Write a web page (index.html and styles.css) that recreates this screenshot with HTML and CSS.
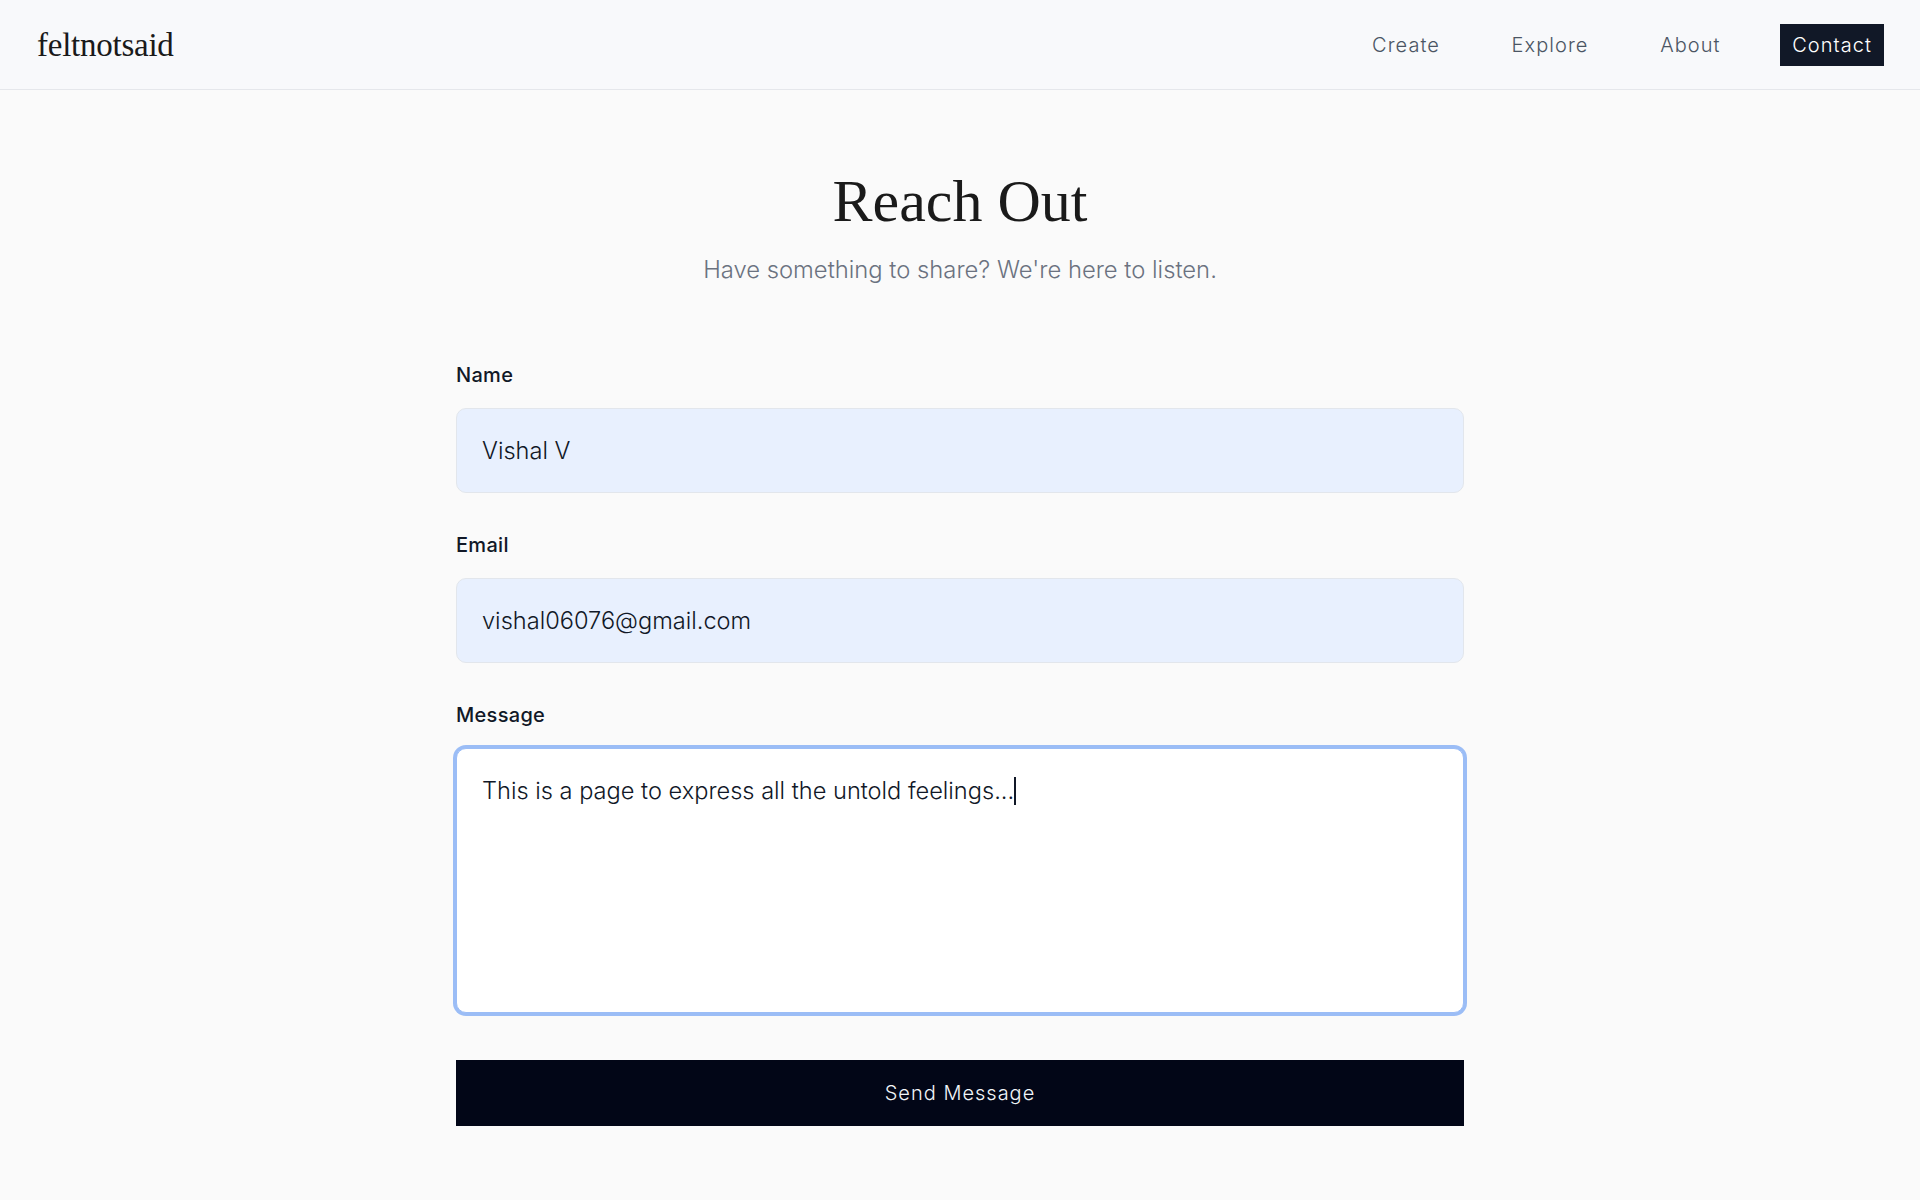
FILE: index.html
```html
<!DOCTYPE html>
<html lang="en">
<head>
<meta charset="utf-8">
<title>Reach Out — feltnotsaid</title>
<link rel="stylesheet" href="styles.css">
</head>
<body>
<header class="topbar">
  <a class="logo" href="#">feltnotsaid</a>
  <nav class="nav">
    <a class="nav-link" href="#">Create</a>
    <a class="nav-link" href="#">Explore</a>
    <a class="nav-link" href="#">About</a>
    <a class="nav-link nav-active" href="#">Contact</a>
  </nav>
</header>
<main class="page">
  <h1 class="title">Reach Out</h1>
  <p class="subtitle">Have something to share? We're here to listen.</p>
  <form class="form">
    <div class="field">
      <label class="label" for="name">Name</label>
      <input class="input" id="name" type="text" value="Vishal V">
    </div>
    <div class="field">
      <label class="label" for="email">Email</label>
      <input class="input" id="email" type="email" value="vishal06076@gmail.com">
    </div>
    <div class="field">
      <label class="label" for="message">Message</label>
      <div class="textarea" id="message" role="textbox" aria-multiline="true">This is a page to express all the untold feelings...<span class="caret"></span></div>
    </div>
    <button class="submit" type="button">Send Message</button>
  </form>
</main>
</body>
</html>
```
FILE: styles.css
```css
* { box-sizing: border-box; }
html, body { margin: 0; padding: 0; }
body {
  background: #fafafa;
  font-family: Inter, "Liberation Sans", sans-serif;
  color: #111827;
  min-height: 1200px;
}
.topbar {
  height: 90px;
  display: flex;
  align-items: center;
  justify-content: space-between;
  padding: 0 36px 0 37px;
  background: #f8f9fb;
  border-bottom: 1px solid #e5e7eb;
}
.logo {
  font-family: "Liberation Serif", "DejaVu Serif", serif;
  font-size: 33px;
  color: #1a1a1a;
  text-decoration: none;
  letter-spacing: -0.25px;
  line-height: 1;
  margin-top: 2px;
}
.nav {
  display: flex;
  align-items: center;
  gap: 47.7px;
}
.nav-link {
  font-size: 20px;
  font-weight: 300;
  line-height: 30px;
  padding: 6px 12px;
  color: #4b5563;
  text-decoration: none;
  letter-spacing: 1.05px;
}
.nav-active {
  background: #111827;
  color: #ffffff;
}
.page {
  padding-top: 81px;
  padding-bottom: 60px;
}
.title {
  margin: 0;
  text-align: center;
  font-family: "Liberation Serif", "DejaVu Serif", serif;
  font-weight: 400;
  font-size: 60px;
  line-height: 60px;
  color: #1a1a1a;
}
.subtitle {
  margin: 21px 0 0;
  text-align: center;
  font-size: 23.8px;
  font-weight: 300;
  line-height: 35px;
  color: #6b7280;
}
.form {
  width: 1008px;
  margin: 73px auto 0;
  display: flex;
  flex-direction: column;
  gap: 37px;
}
.field {
  display: flex;
  flex-direction: column;
}
.label {
  font-size: 20px;
  line-height: 30px;
  font-weight: 500;
  letter-spacing: 0.3px;
  color: #111827;
  margin-bottom: 18px;
}
.input {
  height: 85px;
  padding: 0 24px 0 25px;
  border: 1px solid #e2e6ec;
  border-radius: 10px;
  background: #e8f0fe;
  font-family: Inter, "Liberation Sans", sans-serif;
  font-size: 23.6px;
  font-weight: 300;
  color: #111827;
  outline: none;
}
.textarea {
  height: 265px;
  padding: 24px 24px 24px 25px;
  border: 1px solid #9bbdf6;
  box-shadow: 0 0 0 3px #9bbdf6;
  border-radius: 10px;
  background: #ffffff;
  font-size: 23.6px;
  font-weight: 300;
  line-height: 36px;
  color: #111827;
}
.caret {
  display: inline-block;
  width: 2px;
  height: 28px;
  background: #111827;
  vertical-align: -6px;
}
.submit {
  margin-top: 10px;
  height: 66px;
  width: 100%;
  border: none;
  border-radius: 0;
  background: #020617;
  color: #f1f5f9;
  font-family: Inter, "Liberation Sans", sans-serif;
  font-size: 20px;
  font-weight: 300;
  letter-spacing: 1px;
  cursor: pointer;
}
```
